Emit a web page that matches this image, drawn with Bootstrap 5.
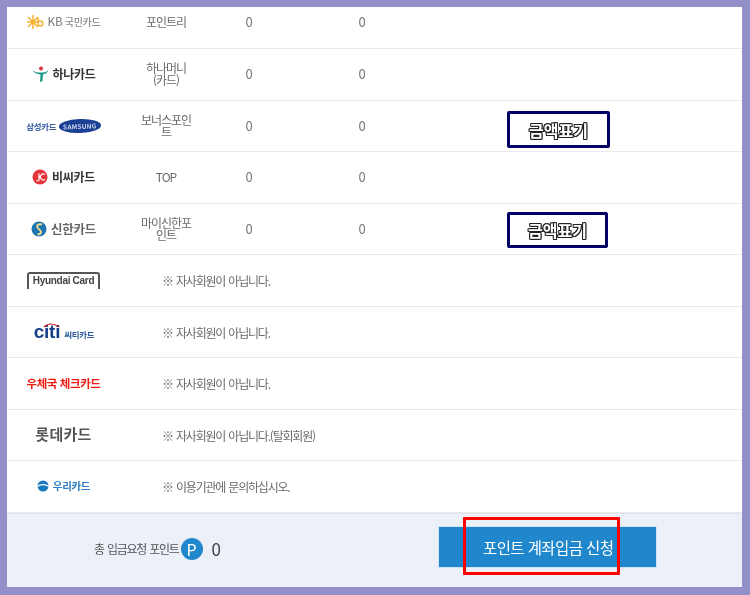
<!DOCTYPE html>
<html lang="ko"><head><meta charset="utf-8">
<link rel="stylesheet" href="https://cdn.jsdelivr.net/npm/bootstrap@5.3.0/dist/css/bootstrap.min.css">
<style>
html,body{margin:0;width:750px;height:595px;overflow:hidden;background:#938fc9}
body{font-family:"Noto Sans CJK KR","Noto Sans",sans-serif;color:#6a6a6a;font-size:12px;letter-spacing:-1px;line-height:12px}
.frame{position:relative;margin:7px 8px 0 7px;width:735px;height:580px;background:#fff;overflow:hidden;filter:blur(.35px)}
.pt-row{height:51.5px;border-bottom:1.5px solid #e9e9e9}
.pt-first{height:42px;padding-bottom:11px}
.c-logo{width:113px;flex:none;display:flex;justify-content:center;align-items:center}
.c-name{width:62px;flex:none;text-align:center;margin-left:15px}
.c-num{flex:none;text-align:center;width:20px;font-size:13px;letter-spacing:0;color:#777}
.c-a{margin-left:42px}.c-b{margin-left:93px}
.c-note{margin-left:42px;margin-top:1.5px;letter-spacing:-1.2px;word-spacing:1px}
.amt{margin-left:135px;margin-top:8px;height:37px;width:103px;border:3px solid #000066;border-radius:2px;display:flex;align-items:center;justify-content:center;font-size:16px;font-weight:700;color:#fff;letter-spacing:0;text-shadow:1px 0 #222,-1px 0 #222,0 1px #222,0 -1px #222,1px 1px #222,-1px -1px #222,1px -1px #222,-1px 1px #222}
.amt2{width:101px;height:36px;margin-top:3px}
.lg{font-weight:700;letter-spacing:-.3px;white-space:nowrap;line-height:1}
.foot{height:74.5px;background:#ebf0f9;border-top:1px solid #dfe3ea;color:#444;padding-bottom:4px}
.sum{margin-left:87px;margin-top:1px;letter-spacing:-1.25px;word-spacing:1px;font-size:12px;color:#555}
.pic{width:22px;height:22px;margin-top:1px;border-radius:50%;background:#2187cd;color:#fff;font-size:16px;letter-spacing:0;margin-left:2px}
.zero{font-size:17px;margin-top:1px;letter-spacing:0;margin-left:9px;color:#444}
.go{margin-left:217px;margin-bottom:2px;width:219px;height:42px;background:#2187cd;color:#fff;border:1px solid #cfe3f4;border-radius:0;font-size:15.5px;letter-spacing:-.6px;padding:0 0 0 44px}
.redbox{position:absolute;left:456px;top:510px;width:157px;height:58px;border:3px solid #f00;border-radius:1px}
.sam{display:inline-block;background:#1b3f94;color:#cfd8ee;border-radius:50%;font-size:6.5px;font-weight:700;letter-spacing:.2px;padding:3.5px 4px;line-height:1;margin-left:3px;transform:rotate(-2deg)}
.hy{border:2px solid #555;border-bottom:0;border-radius:3px 3px 0 0;color:#444;font-size:10px;letter-spacing:-.3px;font-weight:700;padding:1px 4px 3px;font-family:"Liberation Sans",sans-serif;line-height:11px}
.citi{font-family:"Liberation Sans",sans-serif;font-size:19px;color:#123f85;letter-spacing:-.2px;font-weight:700;line-height:1;margin-left:1px}
.kb{font-size:11.5px}
.up1{margin-top:-2px}
</style></head>
<body>
<div class="frame">
  <div class="d-flex align-items-center pt-row pt-first">
    <div class="c-logo gap-1"><svg width="17" height="14" viewBox="0 0 17 14"><g stroke="#f9b233" stroke-width="1.500" stroke-linecap="round"><path d="M6 .5v13M.5 7h10M1.500 2.500l9 9M1.500 11.500l9-9"/></g><circle cx="13.500" cy="8.500" r="2.500" fill="none" stroke="#f9b233" stroke-width="1.400"/><path d="M11 2v6" stroke="#f9b233" stroke-width="1.400"/></svg><span class="lg" style="color:#8a8a8a;font-size:10px;font-weight:500"><span class="kb">KB</span> 국민카드</span></div>
    <div class="c-name">포인트리</div><div class="c-num c-a">0</div><div class="c-num c-b">0</div>
  </div>
  <div class="d-flex align-items-center pt-row">
    <div class="c-logo gap-1"><svg width="17" height="16" viewBox="0 0 17 16"><circle cx="9" cy="2.500" r="2" fill="#d8363f"/><path d="M.5 4C3 6.500 5.500 6.500 8.500 6.500S14 6.500 16.500 4C15.500 7 13 8 11 8.500L10.500 15 8 16l.5-7.500C5 8 2 7 .5 4z" fill="#1a9a8a"/></svg><span class="lg" style="color:#333;font-size:12px">하나카드</span></div>
    <div class="c-name">하나머니<br>(카드)</div><div class="c-num c-a">0</div><div class="c-num c-b">0</div>
  </div>
  <div class="d-flex align-items-center pt-row">
    <div class="c-logo"><span class="lg" style="color:#3d5ea6;font-size:8.500px;letter-spacing:-.3px">삼성카드</span><span class="sam">SAMSUNG</span></div>
    <div class="c-name">보너스포인<br>트</div><div class="c-num c-a">0</div><div class="c-num c-b">0</div>
    <div class="amt">금액표기</div>
  </div>
  <div class="d-flex align-items-center pt-row">
    <div class="c-logo gap-1"><svg width="16" height="16" viewBox="0 0 16 16"><circle cx="8" cy="8" r="7.500" fill="#e5343c"/><path d="M7 4.500v6c0 1.500-1.500 1.500-2.500 1M13 5.500a3 3 0 1 0 0 5" fill="none" stroke="#fff" stroke-width="1.200"/></svg><span class="lg" style="color:#333;font-size:12px">비씨카드</span></div>
    <div class="c-name">TOP</div><div class="c-num c-a">0</div><div class="c-num c-b">0</div>
  </div>
  <div class="d-flex align-items-center pt-row">
    <div class="c-logo gap-1"><svg width="16" height="16" viewBox="0 0 16 16"><circle cx="8" cy="8" r="7.500" fill="#1c75b0"/><path d="M11 3.500C8 2.500 5.500 4 6.500 6.500c.8 2 4 2.500 3.500 5-.3 1.500-2 2-3.500 1.500" fill="none" stroke="#f4d78a" stroke-width="2"/></svg><span class="lg" style="color:#666;font-size:12.500px">신한카드</span></div>
    <div class="c-name">마이신한포<br>인트</div><div class="c-num c-a">0</div><div class="c-num c-b">0</div>
    <div class="amt amt2">금액표기</div>
  </div>
  <div class="d-flex align-items-center pt-row">
    <div class="c-logo"><span class="hy">Hyundai Card</span></div><div class="c-note">※ 자사회원이 아닙니다.</div>
  </div>
  <div class="d-flex align-items-center pt-row">
    <div class="c-logo"><span class="citi position-relative">citi<svg class="position-absolute top-0 start-0" width="32" height="10" viewBox="0 0 32 10"><path d="M10 5c4-4 10-4 15 0" fill="none" stroke="#d8262c" stroke-width="1.200"/></svg></span><span class="lg ms-1" style="color:#2b5aa0;font-size:8.500px;margin-top:5px">씨티카드</span></div><div class="c-note">※ 자사회원이 아닙니다.</div>
  </div>
  <div class="d-flex align-items-center pt-row">
    <div class="c-logo"><span class="lg" style="color:#f01c14;font-size:11.500px;letter-spacing:-.4px">우체국 체크카드</span></div><div class="c-note">※ 자사회원이 아닙니다.</div>
  </div>
  <div class="d-flex align-items-center pt-row">
    <div class="c-logo"><span class="lg up1" style="color:#555;font-size:15px;letter-spacing:.3px">롯데카드</span></div><div class="c-note">※ 자사회원이 아닙니다.(탈회회원)</div>
  </div>
  <div class="d-flex align-items-center pt-row">
    <div class="c-logo gap-1"><svg width="12" height="12" viewBox="0 0 12 12"><circle cx="6" cy="6" r="5.500" fill="#1878c0"/><path d="M0 6.500c3-2.500 9-2.500 12 0" fill="none" stroke="#fff" stroke-width="1.300"/></svg><span class="lg" style="color:#2b7cc0;font-size:10.500px">우리카드</span></div><div class="c-note">※ 이용기관에 문의하십시오.</div>
  </div>
  <div class="d-flex align-items-center foot">
    <div class="sum">총 입금요청 포인트</div>
    <div class="pic d-flex align-items-center justify-content-center">P</div>
    <div class="zero">0</div>
    <button class="btn go text-start">포인트 계좌입금 신청</button>
  </div>
  <div class="redbox"></div>
</div>
</body></html>
